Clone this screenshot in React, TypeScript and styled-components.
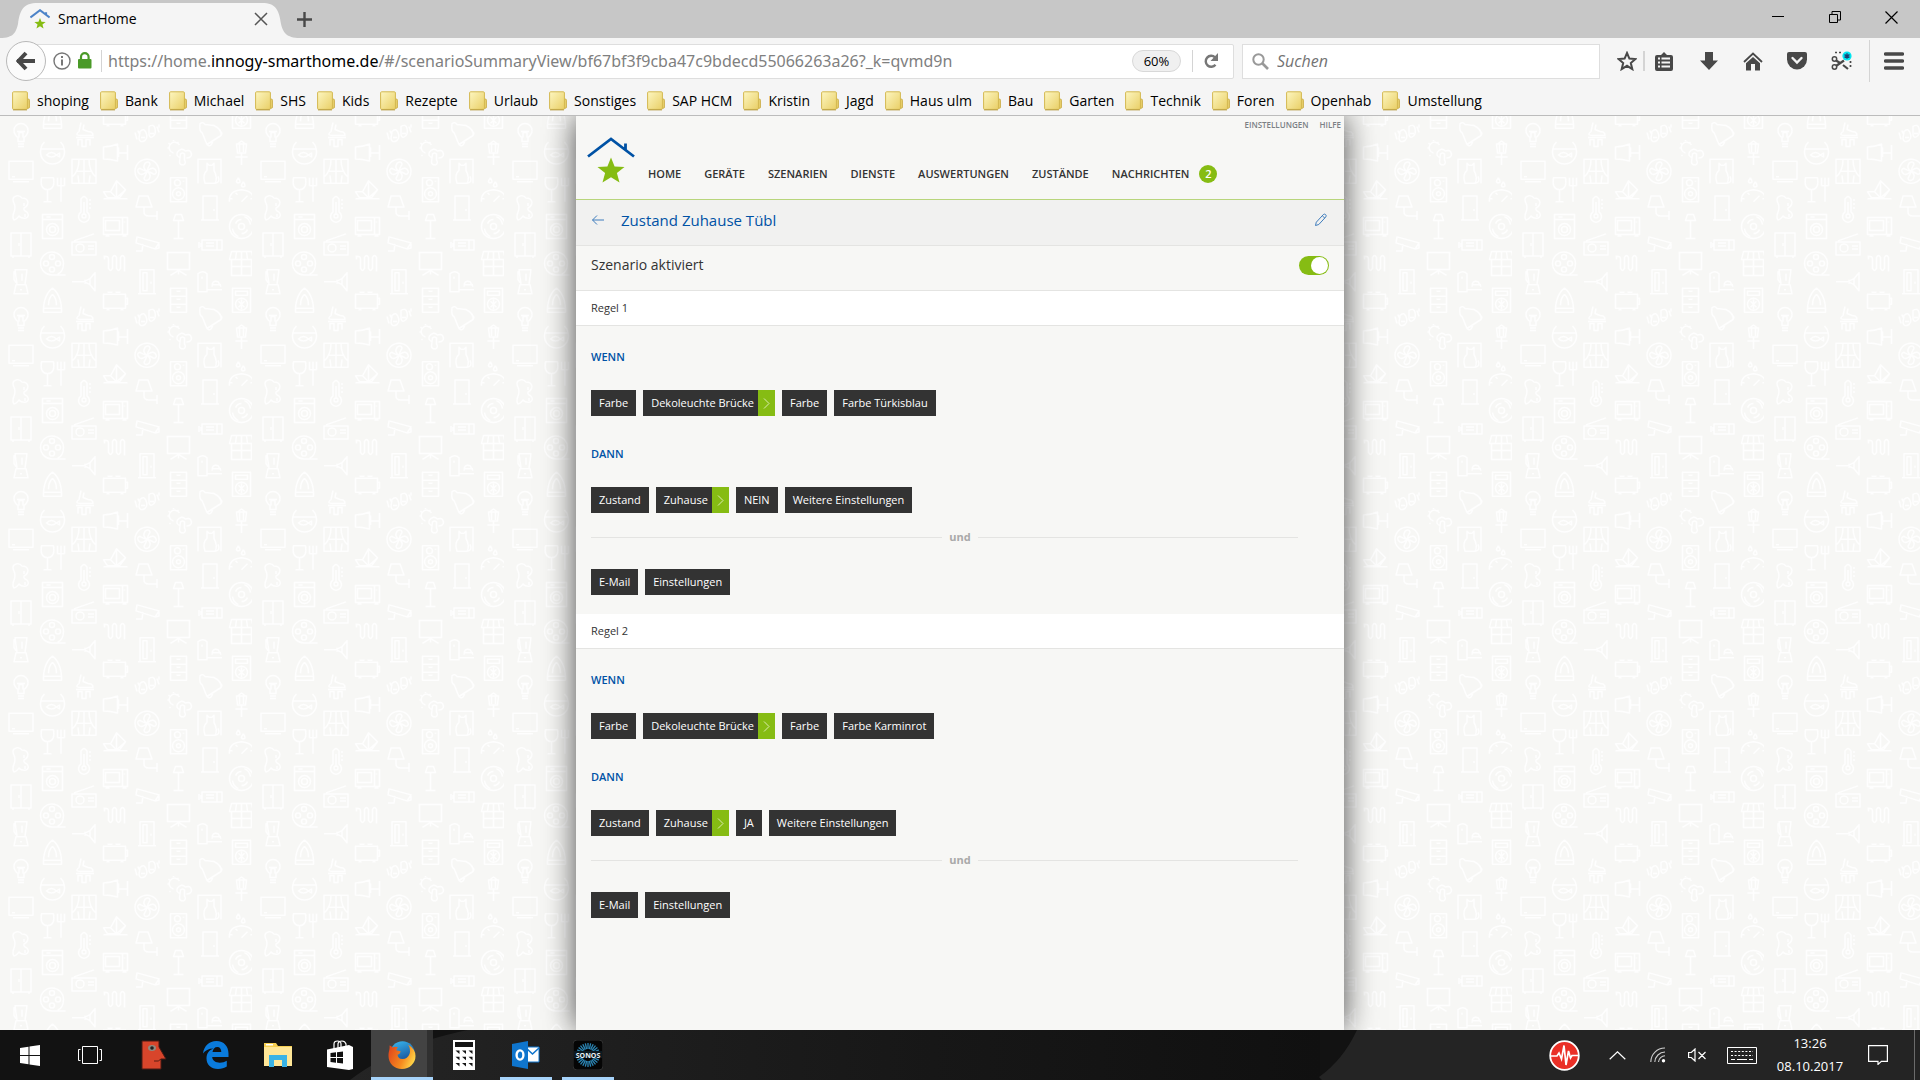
import React, { useState } from "react";
import styled, { createGlobalStyle, css } from "styled-components";

const segoe = `"Open Sans", "Noto Sans", "Segoe UI", sans-serif`;
const green = "#86bc13";
const blue = "#0052a5";
const ink = "#333333";

const GlobalStyle = createGlobalStyle`
  *, *::before, *::after { box-sizing: border-box; }
  html, body { margin: 0; padding: 0; }
  body { font-family: ${segoe}; color: #000; background: #f7f7f5; }
  button { font: inherit; color: inherit; background: none; border: 0; padding: 0; cursor: pointer; }
  a { color: inherit; text-decoration: none; }
  h1, h2, h3, p { margin: 0; }
  svg { display: block; flex: none; }
`;

const Desktop = styled.div`
  display: flex;
  flex-direction: column;
  height: 100vh;
  overflow: hidden;
`;

/* ---------- browser window ---------- */

const TabStrip = styled.header`
  display: flex;
  align-items: center;
  height: 38px;
  background: #c7c7c7;
`;

const Tab = styled.div`
  position: relative;
  display: flex;
  align-items: center;
  width: 290px;
  height: 38px;
  padding: 0 22px 0 30px;
`;

const TabShape = styled.svg`
  position: absolute;
  inset: 0;
`;

const TabTitle = styled.span`
  position: relative;
  flex: 1;
  padding: 0 0 0 8px;
  font-size: 14px;
  line-height: 20px;
`;

const Layered = styled.span`
  position: relative;
  display: flex;
`;

const IconButton = styled.button<{ $w?: number }>`
  position: relative;
  display: flex;
  align-items: center;
  justify-content: center;
  width: ${(p) => p.$w ?? 28}px;
  height: 30px;
`;

const WindowControls = styled.div`
  display: flex;
  margin-left: auto;
  padding-bottom: 4px;
`;

const Toolbar = styled.div`
  display: flex;
  align-items: center;
  height: 46px;
  padding: 0 2px 0 6px;
  background: #f5f5f5;
`;

const BackButton = styled.button`
  position: relative;
  z-index: 1;
  display: flex;
  align-items: center;
  justify-content: center;
  flex: none;
  width: 40px;
  height: 40px;
  border: 1px solid #b9b9b9;
  border-radius: 50%;
  background: #fbfbfb;
`;

const AddressBar = styled.div`
  display: flex;
  align-items: center;
  flex: 1;
  height: 35px;
  margin-left: -12px;
  padding: 0 4px 0 18px;
  background: #fff;
  border: 1px solid #dedede;
  border-radius: 2px;
`;

const Address = styled.div`
  flex: 1;
  padding-left: 6px;
  font-family: "Noto Sans", "Open Sans", "Segoe UI", sans-serif;
  font-size: 16px;
  line-height: 24px;
  color: #808080;
  white-space: nowrap;
  overflow: hidden;
  outline: none;

  b { font-weight: 400; color: #000; }
`;

const Rule = styled.span<{ $h: number; $w?: number; $gap?: number }>`
  flex: none;
  width: ${(p) => p.$w ?? 1}px;
  height: ${(p) => p.$h}px;
  margin-left: ${(p) => p.$gap ?? 0}px;
  background: #d4d4d4;
`;

const ZoomButton = styled.button`
  height: 22px;
  width: 49px;
  margin-right: 11px;
  border: 1px solid #d8d8d8;
  border-radius: 11px;
  background: #f0f0f0;
  font-size: 13px;
  line-height: 18px;
`;

const SearchBox = styled.label`
  display: flex;
  align-items: center;
  gap: 8px;
  width: 358px;
  height: 35px;
  margin: 0 11px 0 8px;
  padding: 0 9px;
  background: #fff;
  border: 1px solid #dedede;
`;

const SearchInput = styled.input`
  flex: 1;
  min-width: 0;
  border: 0;
  padding: 0;
  outline: none;
  background: transparent;
  font: italic 16px/24px ${segoe};

  &::placeholder { color: #737373; opacity: 1; }
`;

const Tools = styled.div`
  display: flex;
  align-items: center;
`;

const Bookmarks = styled.nav`
  display: flex;
  align-items: center;
  gap: 11px;
  height: 32px;
  padding: 2px 12px 0;
  background: #f5f5f5;
  border-bottom: 1px solid #bcbcbc;
  font-size: 14px;
  line-height: 20px;
  white-space: nowrap;
`;

const Bookmark = styled.a`
  display: flex;
  align-items: center;
  gap: 7px;
`;

/* ---------- page ---------- */

const Viewport = styled.main`
  position: relative;
  display: flex;
  justify-content: center;
  flex: 1;
  min-height: 0;
  overflow: hidden;
  background: #f7f7f5;
`;

const Backdrop = styled.svg`
  position: absolute;
  inset: 0;
  width: 100%;
  height: 100%;
`;

const Panel = styled.div`
  position: relative;
  width: 40%;
  min-width: 768px;
  background: #f7f7f5;
  box-shadow: 0 0 30px rgba(0, 0, 0, 0.7);
  color: ${ink};
`;

const PanelHeader = styled.header`
  height: 84px;
  border-bottom: 1px solid #b8d57b;
`;

const MetaLinks = styled.nav`
  display: flex;
  justify-content: flex-end;
  gap: 11px;
  height: 16px;
  padding: 2px 3px 0 0;
  font-size: 8px;
  font-weight: 600;
  line-height: 14px;
  color: #7b8185;
`;

const NavRow = styled.div`
  display: flex;
  gap: 13px;
  padding: 4px 0 0 11px;
`;

const MainNav = styled.nav`
  display: flex;
  align-items: center;
  gap: 23px;
  height: 18px;
  margin-top: 29px;
  font-size: 11px;
  font-weight: 600;
  line-height: 18px;

  a { display: flex; gap: 10px; }
`;

const Badge = styled.span`
  width: 18px;
  height: 18px;
  border-radius: 50%;
  background: ${green};
  color: #fff;
  text-align: center;
`;

const bar = css`
  display: flex;
  align-items: center;
  border-bottom: 1px solid #e4e4e2;
`;

const TitleBar = styled.div`
  ${bar}
  gap: 16px;
  height: 46px;
  padding: 0 15px 6px;
  background: #f1f1f0;
  color: ${blue};
`;

const Title = styled.h1`
  flex: 1;
  font-size: 15px;
  font-weight: 400;
  line-height: 22px;
`;

const PlainIcon = styled.button`
  display: flex;
`;

const ActiveRow = styled.label`
  ${bar}
  justify-content: space-between;
  height: 45px;
  padding: 0 15px 6px;
  font-size: 14px;
  line-height: 20px;
`;

const Switch = styled.input`
  appearance: none;
  display: flex;
  width: 30px;
  height: 19px;
  margin: 0;
  padding: 1px;
  border-radius: 10px;
  background: #bbb;
  cursor: pointer;

  &::before {
    content: "";
    width: 17px;
    height: 17px;
    border-radius: 50%;
    background: #fff;
  }

  &:checked { justify-content: flex-end; background: ${green}; }
`;

const RuleTitle = styled.h2`
  ${bar}
  height: 35px;
  padding: 0 15px;
  background: #fff;
  font-size: 11px;
  font-weight: 400;
  line-height: 16px;
`;

const RuleBody = styled.div`
  padding: 23px 15px 19px;
`;

const Clause = styled.h3<{ $next?: boolean }>`
  margin: ${(p) => (p.$next ? 30 : 0)}px 0 25px;
  font-size: 11px;
  font-weight: 600;
  line-height: 16px;
  color: ${blue};
`;

const Chips = styled.div`
  display: flex;
  gap: 7px;
`;

const Chip = styled.button<{ $arrow?: boolean }>`
  display: flex;
  height: 26px;
  padding: 0 ${(p) => (p.$arrow ? 0 : 8)}px 0 8px;
  background: ${ink};
  color: #fff;
  font-size: 11px;
  line-height: 26px;
  white-space: nowrap;
`;

const ChipArrow = styled.span`
  display: flex;
  align-items: center;
  justify-content: center;
  width: 17px;
  height: 26px;
  margin-left: 4px;
  background: ${green};
`;

const And = styled.div`
  display: flex;
  align-items: center;
  gap: 7px;
  margin: 16px 0 24px;
  color: #a9a9a9;
  font-size: 11px;
  font-weight: 700;
  line-height: 16px;

  &::before, &::after {
    content: "";
    flex: 1;
    height: 1px;
    background: #e4e4e2;
  }
  &::before { flex: 1 1 31px; }
  &::after { margin-right: 31px; }
`;

/* ---------- taskbar ---------- */

const Taskbar = styled.footer`
  position: relative;
  display: flex;
  align-items: stretch;
  flex: none;
  height: 50px;
  background: #121212;
  color: #fff;
`;

const Sheen = styled.svg`
  position: absolute;
  inset: 0;
  width: 100%;
  height: 100%;
`;

const Apps = styled.div`
  position: relative;
  display: flex;
  gap: 3px;
`;

const AppGroup = styled.div`
  display: flex;
`;

const AppButton = styled.button<{ $w: number; $open?: boolean; $active?: boolean }>`
  display: flex;
  align-items: center;
  justify-content: center;
  width: ${(p) => p.$w}px;
  height: 50px;
  ${(p) => p.$active && css`background: linear-gradient(90deg, #434343 56px, #303030 56px);`}
  ${(p) =>
    p.$open &&
    css`
      position: relative;
      &::after {
        content: "";
        position: absolute;
        left: ${p.$active ? 0 : 5}px;
        right: ${p.$active ? 0 : 5}px;
        bottom: 0;
        height: 3px;
        background: #a6d3fa;
      }
    `}
`;

const Tray = styled.div`
  position: relative;
  display: flex;
  align-items: center;
  margin-left: auto;
`;

const TrayButton = styled.button<{ $w: number }>`
  display: flex;
  align-items: center;
  justify-content: center;
  width: ${(p) => p.$w}px;
  height: 50px;
`;

const Clock = styled.button`
  width: 88px;
  height: 50px;
  font-size: 13px;
  line-height: 23px;
`;

const ShowDesktop = styled.button`
  width: 6px;
  height: 50px;
  margin-left: 12px;
  border-left: 1px solid #6b6b6b;
`;

/* ---------- drawings ---------- */

const House = ({ size = 20, roof = "#4c83c8" }: { size?: number; roof?: string }) => (
  <svg width={size} height={size} viewBox="0 0 48 46">
    <path d="M1 19.5 L24 2 L47 19.5 M38.5 13 V6.500" fill="none" stroke={roof} strokeWidth={size > 30 ? 2.8 : 5} />
    <path d="M24 20.500 l3.600 9 9.900 .5 -7.600 6 2.600 9.500 -8.500 -5.300 -8.500 5.300 2.600 -9.500 -7.600 -6 9.900 -.5z" fill={green} />
  </svg>
);

const Folder = () => (
  <svg width="18" height="20" viewBox="0 0 18 20">
    <defs>
      <linearGradient id="fold" x1="0" y1="0" x2="1" y2="1">
        <stop offset="0" stopColor="#fdf6c0" />
        <stop offset="1" stopColor="#e9cf66" />
      </linearGradient>
    </defs>
    <path d="M13 8h3.200q1.300 0 1.300 1.300v6.700q0 1.300-1.300 1.300H13z" fill="#e6cd68" stroke="#c9ab45" strokeWidth=".8" />
    <rect x=".6" y=".8" width="14.800" height="17.600" rx="1" fill="url(#fold)" stroke="#d3b850" />
    <path d="M1 18.900h14" stroke="#b79a3e" strokeWidth=".9" />
  </svg>
);

const iconAt = (x: number, y: number, node: React.ReactNode, key: string) => (
  <g key={key} transform={`translate(${x} ${y})`}>{node}</g>
);

/* Household motifs, each drawn round its own centre; five to a column. */
const motifs: React.ReactNode[][] = [
  [
    <path d="M-3 7v-4q-4-3-4-7a7 7 0 0 1 14 0q0 4-4 7v4zM-3 9.500h6M-3 12h6M-2 3v-5h4v5M-4-3h8" />,
    <path d="M-12-10h24v18h-24zM-8 10.500h16M-9 5.500h3" />,
    <path d="M-7-11q5-3 8 1q5 0 6 4q0 4-4 6q-1 2 3 4q3 4-1 6q-4 1-7-2q-2 3-5 4q-2-3 0-8q2-5 0-9q-2-4 0-6zM3-5v3M4 6v3" />,
    <path d="M-10-12h20v23h-20zM0-12v23M-2-2v3M-8 11v2M8 11v2" />,
    <path d="M-6-12h12l-2 15h-8zM-5 3h10l2 9h-14zM-6-10h-1v8l2 3M1-8v7M-1 8h2" />,
  ],
  [
    <path d="M-8-11q-4 4-4 10a12 12 0 0 0 24 0q0-6-4-10M-11-4h22M-6 2q5-5 10 0l3-2v4l-3-2q-5 4-10 0z" />,
    <path d="M-11-12h12q2 11-6 12q-8-1-6-12zM-5 0v12M-9 12h8M5-12v8M8.500-12v24M12-12v8M5-4h7" />,
    <path d="M-10-12h20v24h-20zM-10-7h20M-6-9.500h4M6 3a6 6 0 1 1-12 0a6 6 0 1 1 12 0M3 3a3 3 0 1 1-6 0a3 3 0 1 1 6 0" />,
    <path d="M11 0a11.500 11.500 0 1 0-11 11.500h13M2-6.500a2.500 2.500 0 1 1-5 0a2.500 2.500 0 1 1 5 0M2 6a2.500 2.500 0 1 1-5 0a2.500 2.500 0 1 1 5 0M-4 0a2.500 2.500 0 1 1-5 0a2.500 2.500 0 1 1 5 0M8 0a2.500 2.500 0 1 1-5 0a2.500 2.500 0 1 1 5 0M11 0q0 8-6 11" />,
    <path d="M0-12q-8 6-9 20v4h18v-4q-1-14-9-20zM-9 8h18M0-6q-4 4-4 11M0-6q4 4 4 11" />,
  ],
  [
    <path d="M-3-12l-2 9q-5 4 2 4h12q0-4-5-4l-5-2 1-5M-8 3h18M-6 11v-6h4v7h4v-7h4v6" />,
    <path d="M-12-12h24v24h-24zM-5-12q0 12-7 18M5-12q0 12 7 18M0-12v24M-7 0h14M-5 12l-1-8M5 12l1-8" />,
    <path d="M-3 4v-13q3-5 6 0v13a5.500 5.500 0 1 1-6 0zM0-6v13M5-8h2M5-4h2M5 0h2M2 8a2 2 0 1 1-4 0a2 2 0 1 1 4 0" />,
    <path d="M-12-3h24v13h-24zM-10-4l20-7M0 3a4 4 0 1 1-8 0a4 4 0 1 1 8 0M4 1h6M4 4h6" />,
    <path d="M-12 0h12l6-3 5-6v18l-5-6-6-3M1-2v4M6-3v6" />,
  ],
  [
    <path d="M-12-6q7 0 14-3v17q-7-2-14-2zM2 0h10M12-8v15M2-5h1v9" />,
    <path d="M-12 9h24M-8 8l-4-6h7l6-11 9 9-6 8zM-5 2l6 6 9-8M1-9v17" />,
    <path d="M-12-9h24v17h-24zM-10-6h14v10h-14zM7-9v17M9-5v1M-10 9.500h4M7 9.500h4" />,
    <path d="M-12-7h3q2 0 2 3v9q2 4 4 0v-11q2-4 4 0v11q2 4 4 0v-11q2-4 4 0v14M-11-8v4" />,
    <path d="M-12-6h22v14h-22zM-8-8h5M0-8h5M10-2h2v6h-2M-9 9.500h3M5 9.500h3" />,
  ],
  [
    <path d="M-7-3q4-4 6 1t-1 8q-5 3-6-2zM2-8q5-3 6 2t-1 7q-4 4-5-1zM-12-2l2 7M-9-4l1 3M10-8l2 6M12-10v3M-6 3h4M3-1h4" />,
    <path d="M12 0a12 12 0 1 1-24 0a12 12 0 1 1 24 0M0 0q-5-3-2-8q4-3 5 1q-2 3-3 7q5-5 8-2q3 4-1 5q-3-2-7-3q5 3 2 8q-4 3-5-1q2-3 3-7q-5 5-8 2q-3-4 1-5q3 2 7 3" />,
    <path d="M-8-12h9l4 11h-16zM-3-1v5q0 4 5 4h8M10 3v9" />,
    <path d="M-10-8l22 6-4 6-19-6zM-4-1l-1 7h-6M8 4l4-1v-4" />,
    <path d="M-7-12h14v24h-14zM-9 12h18M-4-9h4v18h-4zM4 0v2" />,
  ],
  [
    <path d="M1-8a5.500 5.500 0 1 0-6 8M-5-12v-1M-11-5h2M-10-10l2 2M0-11l-1 1M-9 3l1-1M2 5q-5-2-3-6q4-5 8-1q5-2 6 3q0 4-5 4M2 1q2-2 4 0v6q2 3-1 5q-4 0-4-3z" />,
    <path d="M-8-12h16v24h-16zM2-7a3 3 0 1 1-6 0a3 3 0 1 1 6 0M6 4a6 6 0 1 1-12 0a6 6 0 1 1 12 0M2 4a2 2 0 1 1-4 0a2 2 0 1 1 4 0M5-9v1" />,
    <path d="M-3-12h6l2 6h-10zM0-6v18M-5 12h10" />,
    <path d="M-12-11h24M-11-11v17h22v-17M0 6v5M0 7l-8 5M0 7l8 5" />,
    <path d="M-8-12h16v24h-16zM-8-4h16M-8 4h16M-2-9h4M-2-1h4M-2 7h4" />,
  ],
  [
    <path d="M-10-11q3-2 5 1l9 1q8 4 7 10l-14 9-5-12q-3-1-2-9zM-3 10q4 4 6-4M11 1q2-3-1-4" />,
    <path d="M-12 12v-24h23v24M-5 12q-3-9 2-13v-7l2 2h3l2-2v7q4 8 1 13zM5 12q6-1 3-7" />,
    <path d="M-7-12h14v24h-14zM-9 12h18M3 2h2" />,
    <path d="M-8-5h20v10h-20zM-11-3v6M-9-2v4M-4-2h8M-4 1h8M7-5v10" />,
    <path d="M-12-8q5-4 9 0v18h-9zM-3 8h15M2 5q0-7 6-5l3 5M2 3h9M-8-5v2" />,
  ],
  [
    <path d="M-5-9h10l-1 9h-8zM-4-9l4-3 4 3M-2-9v8M2-9v8M0 0v12M-6 4h12" />,
    <path d="M-12 12q-1-11 12-12q13 1 12 12M0 12l6-6M-12 9h3M9 9h3M-6 3l2 2M-3-12q-4 5 0 5q3 0 0-5M2-8q-4 5 0 5q3 0 0-5" />,
    <path d="M12 0a12 12 0 1 1-24 0a12 12 0 1 1 24 0M3 0a3 3 0 1 1-6 0a3 3 0 1 1 6 0M-6-3q2-4 6-4M6 3q-2 4-6 4M-9 2q1 6 6 8M9-2q-1-6-6-8" />,
    <path d="M-10-12h20l2 8h-24zM-10-4v16h20v-16M0-4v16M-10 3h20M-5-12l-1 8M0-12v8M5-12l1 8" />,
    <path d="M-9-12h18v24h-18zM-6-9h12v4h-12zM6 4a6 6 0 1 1-12 0a6 6 0 1 1 12 0M-3 1l6 6M3 1l-6 6M0-1v10" />,
  ],
];

const MotifBackdrop = () => (
  <Backdrop aria-hidden="true">
    <defs>
      <pattern id="motifs" width="252" height="184" patternUnits="userSpaceOnUse">
        <g fill="none" stroke="#fefefe" strokeWidth="1.500" strokeLinejoin="round">
          {motifs.flatMap((column, c) =>
            column.flatMap((node, r) => {
              const x = 21 + c * 31.5;
              const y = (c % 2 ? 37 : 18.5) + r * 36.8;
              const cells = [iconAt(x, y, node, `${c}-${r}`)];
              if (y > 170) cells.push(iconAt(x, y - 184, node, `${c}-${r}-wrap`));
              return cells;
            })
          )}
        </g>
      </pattern>
    </defs>
    <rect width="100%" height="100%" fill="url(#motifs)" />
  </Backdrop>
);

/* ---------- content ---------- */

const bookmarks = ["shoping", "Bank", "Michael", "SHS", "Kids", "Rezepte", "Urlaub", "Sonstiges", "SAP HCM", "Kristin", "Jagd", "Haus ulm", "Bau", "Garten", "Technik", "Foren", "Openhab", "Umstellung"];
const sections = ["HOME", "GERÄTE", "SZENARIEN", "DIENSTE", "AUSWERTUNGEN", "ZUSTÄNDE"];

type ChipData = string | { label: string; arrow: true };
const arrow = (label: string): ChipData => ({ label, arrow: true });

const rules: { name: string; when: ChipData[]; then: ChipData[]; and: ChipData[] }[] = [
  {
    name: "Regel 1",
    when: ["Farbe", arrow("Dekoleuchte Brücke"), "Farbe", "Farbe Türkisblau"],
    then: ["Zustand", arrow("Zuhause"), "NEIN", "Weitere Einstellungen"],
    and: ["E-Mail", "Einstellungen"],
  },
  {
    name: "Regel 2",
    when: ["Farbe", arrow("Dekoleuchte Brücke"), "Farbe", "Farbe Karminrot"],
    then: ["Zustand", arrow("Zuhause"), "JA", "Weitere Einstellungen"],
    and: ["E-Mail", "Einstellungen"],
  },
];

const ChipRow = ({ items }: { items: ChipData[] }) => (
  <Chips>
    {items.map((item, i) =>
      typeof item === "string" ? (
        <Chip key={i}>{item}</Chip>
      ) : (
        <Chip key={i} $arrow>
          {item.label}
          <ChipArrow>
            <svg width="7" height="11" viewBox="0 0 7 11">
              <path d="M1 .5 L6 5.500 L1 10.500" fill="none" stroke="#d9ebb0" />
            </svg>
          </ChipArrow>
        </Chip>
      )
    )}
  </Chips>
);

const Browser = () => (
  <>
    <TabStrip>
      <Tab>
        <TabShape width="300" height="38" viewBox="0 0 300 38">
          <path d="M0 38 C14 38 16 32 18 24 C20 10 23 3 38 3 H262 C276 3 279 10 281 24 C283 32 286 38 300 38z" fill="#f5f5f5" />
        </TabShape>
        <Layered><House /></Layered>
        <TabTitle>SmartHome</TabTitle>
        <IconButton $w={14} aria-label="Tab schließen">
          <svg width="14" height="14" viewBox="0 0 14 14"><path d="M1 1l12 12M13 1L1 13" stroke="#555" strokeWidth="1.500" /></svg>
        </IconButton>
      </Tab>
      <IconButton aria-label="Neuer Tab">
        <svg width="15" height="15" viewBox="0 0 15 15"><path d="M7.500 0v15M0 7.500h15" stroke="#484848" strokeWidth="2.400" /></svg>
      </IconButton>
      <WindowControls>
        <IconButton $w={56} aria-label="Minimieren">
          <svg width="12" height="12" viewBox="0 0 12 12"><path d="M0 5.500h12" stroke="#000" /></svg>
        </IconButton>
        <IconButton $w={57} aria-label="Verkleinern">
          <svg width="12" height="12" viewBox="0 0 12 12"><path d="M.5 3.500h8v8h-8zM3 3.500v-3h8.500v8.500h-3" fill="none" stroke="#000" /></svg>
        </IconButton>
        <IconButton $w={57} aria-label="Schließen">
          <svg width="13" height="13" viewBox="0 0 13 13"><path d="M.5 .5l12 12M12.500 .5l-12 12" stroke="#000" strokeWidth="1.200" /></svg>
        </IconButton>
      </WindowControls>
    </TabStrip>

    <Toolbar>
      <BackButton aria-label="Zurück">
        <svg width="20" height="20" viewBox="0 0 20 20"><path d="M1 10h18M10 2L2.500 10 10 18" fill="none" stroke="#484848" strokeWidth="4" /></svg>
      </BackButton>
      <AddressBar>
        <svg width="18" height="18" viewBox="0 0 18 18"><circle cx="9" cy="9" r="8" fill="none" stroke="#777" strokeWidth="1.400" /><path d="M9 7.500v6M9 4v2" stroke="#777" strokeWidth="2" /></svg>
        <svg width="24" height="18" viewBox="0 0 24 18"><path d="M10 8V5a3.800 3.800 0 0 1 7.600 0v3" fill="none" stroke="#4a9a28" strokeWidth="2.200" /><rect x="7" y="7" width="13.500" height="9.500" rx="1" fill="#4a9a28" /></svg>
        <Rule $h={22} $gap={6} />
        <Address role="textbox" aria-label="Adresse" contentEditable suppressContentEditableWarning spellCheck={false}>
          https://home.<b>innogy-smarthome.de</b>/#/scenarioSummaryView/bf67bf3f9cba47c9bdecd55066263a26?_k=qvmd9n
        </Address>
        <ZoomButton>60%</ZoomButton>
        <Rule $h={22} />
        <IconButton $w={36} aria-label="Neu laden">
          <svg width="15" height="16" viewBox="0 0 15 16"><path d="M11.500 11.800A5.500 5.500 0 1 1 11 4.300" fill="none" stroke="#777" strokeWidth="2.400" /><path d="M14 0v8H6.500z" fill="#777" /></svg>
        </IconButton>
      </AddressBar>
      <SearchBox>
        <svg width="17" height="17" viewBox="0 0 17 17"><circle cx="6.500" cy="6.500" r="5.200" fill="none" stroke="#999" strokeWidth="2" /><path d="M10.500 10.500l5.500 5.500" stroke="#999" strokeWidth="2.600" /></svg>
        <SearchInput placeholder="Suchen" aria-label="Suchen" />
      </SearchBox>
      <Tools>
        <IconButton $w={32} aria-label="Lesezeichen">
          <svg width="20" height="20" viewBox="0 0 20 20"><path d="M10 2l2.400 5.600 6 .5-4.600 4 1.500 6-5.300-3.300-5.300 3.300 1.500-6-4.600-4 6-.5z" fill="none" stroke="#484848" strokeWidth="2" /></svg>
        </IconButton>
        <Rule $h={20} $w={2} />
        <IconButton $w={38} aria-label="Lesezeichenliste">
          <svg width="18" height="19" viewBox="0 0 18 19"><path d="M6 3l3-3 3 3h4q2 0 2 2v12q0 2-2 2H2q-2 0-2-2V5q0-2 2-2z" fill="#484848" /><path d="M3 6.500h2M6.500 6.500H15M3 10.500h2M6.500 10.500H15M3 14.500h2M6.500 14.500H15" stroke="#f5f5f5" strokeWidth="2.200" /></svg>
        </IconButton>
        <IconButton $w={51} aria-label="Downloads">
          <svg width="18" height="18" viewBox="0 0 18 18"><path d="M5 0h8v8.500h5L9 18 0 8.500h5z" fill="#484848" /></svg>
        </IconButton>
        <IconButton $w={38} aria-label="Startseite">
          <svg width="20" height="19" viewBox="0 0 20 19"><path d="M1 10l9-8.500L19 10" fill="none" stroke="#484848" strokeWidth="1.800" /><path d="M10 5l7 6.300V18.500h-5V12H8v6.500H3v-7.200z" fill="#484848" /></svg>
        </IconButton>
        <IconButton $w={50} aria-label="Pocket">
          <svg width="20" height="18" viewBox="0 0 20 18"><path d="M2 0h16q2 0 2 2v5.500a10 10 0 0 1-20 0V2q0-2 2-2z" fill="#484848" /><path d="M5.500 6l4.500 4.500L14.500 6" fill="none" stroke="#f5f5f5" strokeWidth="2.400" strokeLinecap="round" /></svg>
        </IconButton>
        <IconButton $w={39} aria-label="Screenshot">
          <svg width="21" height="20" viewBox="0 0 21 20">
            <circle cx="3.500" cy="8" r="2.200" fill="none" stroke="#484848" strokeWidth="1.500" />
            <circle cx="3.500" cy="16" r="2.200" fill="none" stroke="#484848" strokeWidth="1.500" />
            <path d="M5 9.500l5 3M5 15l8-5.500M12 14l5 4" stroke="#484848" strokeWidth="2.200" />
            <path d="M4 1.500h8M19.500 10v8" stroke="#484848" strokeWidth="1.700" strokeDasharray="2 2" />
            <circle cx="16" cy="5" r="4.600" fill="#00e5f0" /><path d="M16 2.200v5.600M13.500 3.700l5 2.600M18.500 3.700l-5 2.600" stroke="#1c3d70" strokeWidth="1.300" />
          </svg>
        </IconButton>
        <Rule $h={42} $gap={8} />
        <IconButton $w={48} aria-label="Menü">
          <svg width="20" height="18" viewBox="0 0 20 18"><path d="M1.500 2h17M1.500 9h17M1.500 16h17" stroke="#484848" strokeWidth="3.400" strokeLinecap="round" /></svg>
        </IconButton>
      </Tools>
    </Toolbar>

    <Bookmarks aria-label="Lesezeichen">
      {bookmarks.map((name) => (
        <Bookmark href="#" key={name}>
          <Folder />
          {name}
        </Bookmark>
      ))}
    </Bookmarks>
  </>
);

const ScenarioPage = () => {
  const [active, setActive] = useState(true);
  return (
    <Viewport>
      <MotifBackdrop />
      <Panel>
        <PanelHeader>
          <MetaLinks>
            <a href="#">EINSTELLUNGEN</a>
            <a href="#">HILFE</a>
          </MetaLinks>
          <NavRow>
            <House size={48} roof={blue} />
            <MainNav>
              {sections.map((s) => (
                <a href="#" key={s}>{s}</a>
              ))}
              <a href="#">NACHRICHTEN <Badge>2</Badge></a>
            </MainNav>
          </NavRow>
        </PanelHeader>
        <TitleBar>
          <PlainIcon aria-label="Zurück">
            <svg width="14" height="12" viewBox="0 0 14 12"><path d="M1.500 6H13M6 1.500L1.500 6 6 10.500" fill="none" stroke="#3f7dbd" /></svg>
          </PlainIcon>
          <Title>Zustand Zuhause Tübl</Title>
          <PlainIcon aria-label="Bearbeiten">
            <svg width="16" height="14" viewBox="0 0 16 14"><path d="M2.500 12.500l.8-3.300 7-7.600q1.200-1 2.300 0t.2 2.300l-7 7.600zM9.300 2.800l2.600 2.400" fill="none" stroke="#3f7dbd" /></svg>
          </PlainIcon>
        </TitleBar>
        <ActiveRow>
          Szenario aktiviert
          <Switch type="checkbox" checked={active} onChange={(e) => setActive(e.target.checked)} />
        </ActiveRow>
        {rules.map((rule) => (
          <section key={rule.name}>
            <RuleTitle>{rule.name}</RuleTitle>
            <RuleBody>
              <Clause>WENN</Clause>
              <ChipRow items={rule.when} />
              <Clause $next>DANN</Clause>
              <ChipRow items={rule.then} />
              <And>und</And>
              <ChipRow items={rule.and} />
            </RuleBody>
          </section>
        ))}
      </Panel>
    </Viewport>
  );
};

const calcKeys = [0, 1, 2].flatMap((r) => [0, 1, 2].map((c) => [2.5 + c * 6.5, 10.5 + r * 6.3]));
const sonosRays = Array.from({ length: 28 }, (_, i) => (i * 360) / 28);

const WindowsTaskbar = () => (
  <Taskbar>
    <Sheen viewBox="0 0 1920 50" preserveAspectRatio="none" aria-hidden="true">
      <defs>
        <linearGradient id="sheen" x1="0" x2="1">
          <stop offset="0" stopColor="#242424" />
          <stop offset=".6" stopColor="#171717" />
          <stop offset="1" stopColor="#101010" />
        </linearGradient>
      </defs>
      <path d="M468 0 C430 8 390 20 350 50 H1320 V0z" fill="url(#sheen)" />
      <path d="M1357 0 Q1343 30 1319 47 L1322 50 H1920 V0z" fill="#242424" />
    </Sheen>
    <Apps>
      <AppGroup>
        <AppButton $w={60} aria-label="Start">
          <svg width="20" height="21" viewBox="0 0 20 21"><path d="M0 3l8.500-1.200v8.200H0zM9.500 1.600L20 0v10H9.500zM0 11h8.500v8.200L0 18zM9.500 11H20v10L9.500 19.400z" fill="#fff" /></svg>
        </AppButton>
        <AppButton $w={60} aria-label="Taskansicht">
          <svg width="24" height="18" viewBox="0 0 24 18"><path d="M4.500 .5h15v17h-15zM2.500 3.500h-2v11h2M21.500 3.500h2v11h-2" fill="none" stroke="#fff" /></svg>
        </AppButton>
      </AppGroup>
      <AppGroup>
        <AppButton $w={62} aria-label="Kopf">
          <svg width="26" height="30" viewBox="0 0 26 30"><path d="M1 1h17v6l7 12h-5v10H1z" fill="#d8452b" stroke="#4a1a14" /><ellipse cx="11" cy="8" rx="4" ry="3" fill="#8f8a80" /><circle cx="11" cy="8" r="1.800" fill="#222" /><path d="M13 21q5 1 7-2" fill="none" stroke="#5a1c12" /></svg>
        </AppButton>
        <AppButton $w={62} aria-label="Edge">
          <svg width="26" height="28" viewBox="0 0 26 28"><path d="M0 12.500C1 5 6 0 13.500 0 21 0 25.500 5.500 25.500 12.500V16H9.200c.3 4 3.800 5.700 7.600 5.700 2.700 0 5-.7 7-2v5.800C21.500 27 18.500 28 15 28 8 28 3.500 23.500 3.500 17.500 3.500 12.500 6 9 10.500 7.500 5.500 7.500 2 9.500 0 12.500zM9.500 11h8.800c0-3-1.300-5-4-5s-4.300 2-4.800 5z" fill="#0a7bdc" /></svg>
        </AppButton>
        <AppButton $w={62} aria-label="Explorer">
          <svg width="28" height="24" viewBox="0 0 28 24"><path d="M0 0h12l2 3h14v20H0z" fill="#f6cf52" /><path d="M0 4h28v19H0z" fill="#fee697" /><path d="M5 12h18v12h-5v-7h-8v7H5z" fill="#39b3e6" /><path d="M2 1h7v1.500H2z" fill="#fff" /></svg>
        </AppButton>
        <AppButton $w={62} aria-label="Store">
          <svg width="26" height="30" viewBox="0 0 26 30"><path d="M7 9V4q0-3 3.500-3T14 4v4M11 8V3.500q1-2.500 4-2.500t4 3v3" fill="none" stroke="#fff" strokeWidth="1.200" /><path d="M0 9.500L22 5l4 2v22l-4 1L0 27z" fill="#fff" /><path d="M3.500 13l5.500-.7V17H3.500zM10 12.200l6-.8V17h-6zM3.500 18H9v4.700L3.500 22zM10 18h6v5.600l-6-.8z" fill="#111" /></svg>
        </AppButton>
        <AppButton $w={62} $open $active aria-label="Firefox">
          <svg width="28" height="28" viewBox="0 0 28 28">
            <defs>
              <linearGradient id="fox" x1="0" y1=".2" x2="1" y2=".6"><stop offset="0" stopColor="#e0461c" /><stop offset=".6" stopColor="#f58a1f" /><stop offset="1" stopColor="#ffd84a" /></linearGradient>
              <linearGradient id="globe" x1=".3" y1="0" x2=".7" y2="1"><stop offset="0" stopColor="#35b0ea" /><stop offset="1" stopColor="#123a86" /></linearGradient>
            </defs>
            <circle cx="14.500" cy="12.500" r="12.300" fill="url(#globe)" />
            <path d="M1.500 4.500q1.500 0 3 2Q7 5 10 6.300 8 8 8.500 9.500q2 .2 4.300 1-.8 2.500-3.300 3.300Q10 18 14.500 18q5 0 7-5 1.500-5-1.500-9.500 7.500 4.500 7.500 11.500A13.500 13 0 0 1 14 28C6 28 .5 22 .5 15 .5 10 2 8.500 1.500 4.500z" fill="url(#fox)" />
          </svg>
        </AppButton>
        <AppButton $w={62} aria-label="Rechner">
          <svg width="22" height="30" viewBox="0 0 22 30"><path d="M0 0h22v30H0z" fill="#fff" /><path d="M2 2h18v5H2z" fill="#151515" />{calcKeys.map(([x, y], i) => <path key={i} d={`M${x} ${y}h4v3.500z`} fill="#151515" />)}</svg>
        </AppButton>
        <AppButton $w={62} $open aria-label="Outlook">
          <svg width="28" height="28" viewBox="0 0 28 28"><path d="M14 6h13v15H14z" fill="#fff" stroke="#0f75cd" /><path d="M14 7l6.500 6L27 7" fill="none" stroke="#0f75cd" strokeWidth="1.600" /><path d="M0 3l16-3v28L0 25z" fill="#0f75cd" /><ellipse cx="8" cy="14" rx="3.400" ry="4.600" fill="none" stroke="#fff" strokeWidth="2.400" /></svg>
        </AppButton>
        <AppButton $w={62} $open aria-label="Sonos">
          <svg width="30" height="30" viewBox="0 0 30 30">
            <rect width="30" height="30" rx="4" fill="#050505" stroke="#3a3a3a" strokeWidth=".8" />
            {sonosRays.map((a) => <path key={a} d="M15 9V3" stroke="#2c86b5" strokeWidth="1.300" transform={`rotate(${a} 15 15)`} />)}
            <rect x="1" y="11" width="28" height="7" fill="#0b1a22" />
            <text x="15" y="17.500" textAnchor="middle" fontSize="7" fontWeight="700" fill="#e8f2f6">SONOS</text>
          </svg>
        </AppButton>
      </AppGroup>
    </Apps>
    <Tray>
      <TrayButton $w={60} aria-label="Monitor">
        <svg width="31" height="31" viewBox="0 0 31 31"><circle cx="15.500" cy="15.500" r="14.300" fill="#ea2f26" stroke="#fff" strokeWidth="1.800" /><path d="M2 16h6l2-3 2.500 6L15 5.500 17 25l2.500-14 2 7 1.500-2.500h6" fill="none" stroke="#fff" strokeWidth="1.700" /></svg>
      </TrayButton>
      <TrayButton $w={46} aria-label="Weitere Symbole">
        <svg width="17" height="9" viewBox="0 0 17 9"><path d="M.7 8.300l7.800-7.500 7.800 7.500" fill="none" stroke="#fff" strokeWidth="1.200" /></svg>
      </TrayButton>
      <TrayButton $w={36} aria-label="WLAN">
        <svg width="16" height="16" viewBox="0 0 16 16"><path d="M.8 15A14 14 0 0 1 15 1M4.800 15A10.500 10.500 0 0 1 15 5M8.500 15A6.800 6.800 0 0 1 15 8.800" fill="none" stroke="#cfcfcf" strokeWidth="1.100" /><circle cx="13.500" cy="13.800" r="1.700" fill="#fff" /></svg>
      </TrayButton>
      <TrayButton $w={42} aria-label="Ton aus">
        <svg width="19" height="14" viewBox="0 0 19 14"><path d="M.6 4.500h2.700L7 1v12L3.300 9.500H.6zM10.500 4l7 7M17.500 4l-7 7" fill="none" stroke="#fff" strokeWidth="1.200" /></svg>
      </TrayButton>
      <TrayButton $w={48} aria-label="Tastatur">
        <svg width="30" height="17" viewBox="0 0 30 17"><path d="M.5 .5h29v16H.5z" fill="none" stroke="#fff" /><path d="M4 4.500h22M4 8.500h22" stroke="#fff" strokeDasharray="2 1.600" /><path d="M4 12.500h4M10 12.500h10M22 12.500h4" stroke="#fff" /></svg>
      </TrayButton>
      <Clock>
        13:26
        <br />
        08.10.2017
      </Clock>
      <TrayButton $w={48} aria-label="Benachrichtigungen">
        <svg width="20" height="20" viewBox="0 0 20 20"><path d="M.6 .6h18.800v15.800h-6L10 19.400v-3H.6z" fill="none" stroke="#fff" strokeWidth="1.200" /></svg>
      </TrayButton>
      <ShowDesktop aria-label="Desktop anzeigen" />
    </Tray>
  </Taskbar>
);

export default function App() {
  return (
    <Desktop>
      <GlobalStyle />
      <Browser />
      <ScenarioPage />
      <WindowsTaskbar />
    </Desktop>
  );
}
